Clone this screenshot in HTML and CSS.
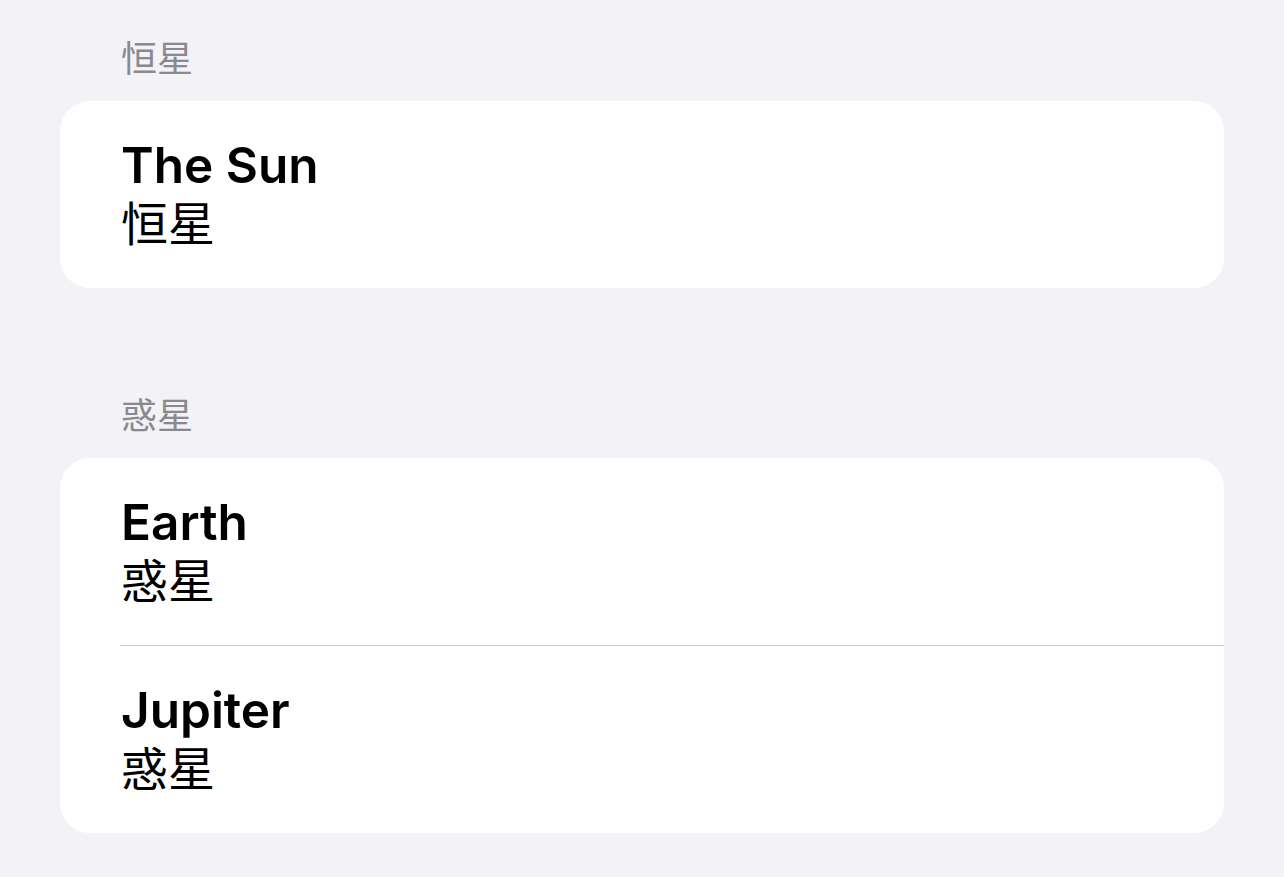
FILE: index.html
```html
<!DOCTYPE html>
<html lang="ja">
<head>
<meta charset="utf-8">
<link rel="stylesheet" href="styles.css">
</head>
<body>
<main class="page">
  <section class="section">
    <h2 class="section-header">恒星</h2>
    <ul class="card">
      <li class="row">
        <div class="title">The Sun</div>
        <div class="subtitle">恒星</div>
      </li>
    </ul>
  </section>
  <section class="section">
    <h2 class="section-header">惑星</h2>
    <ul class="card">
      <li class="row">
        <div class="title">Earth</div>
        <div class="subtitle">惑星</div>
      </li>
      <li class="row">
        <div class="title">Jupiter</div>
        <div class="subtitle">惑星</div>
      </li>
    </ul>
  </section>
</main>
</body>
</html>
```
FILE: styles.css
```css
html, body {
  margin: 0;
  padding: 0;
  background: #f2f2f7;
}
body {
  font-family: Inter, "Noto Sans CJK JP", sans-serif;
  color: #000;
}
.page {
  padding: 37px 60px 0 60px;
  display: flex;
  flex-direction: column;
  gap: 106px;
}
.section {
  display: flex;
  flex-direction: column;
}
.section-header {
  margin: 0 0 20px 0;
  padding-left: 61px;
  font-size: 36px;
  line-height: 44px;
  font-weight: 400;
  color: #8a8a8e;
}
.card {
  list-style: none;
  margin: 0;
  padding: 0;
  background: #fff;
  border-radius: 30px;
  overflow: hidden;
}
.row {
  padding: 35px 0 34px 61px;
  height: 187px;
  box-sizing: border-box;
  display: flex;
  flex-direction: column;
}
.row + .row {
  margin-left: 60px;
  padding-left: 1px;
  height: 188px;
  border-top: 1px solid #c6c6c8;
}
.title {
  font-size: 49.5px;
  line-height: 58px;
  font-weight: 600;
}
.subtitle {
  font-size: 47px;
  line-height: 60px;
  font-weight: 400;
}
```
